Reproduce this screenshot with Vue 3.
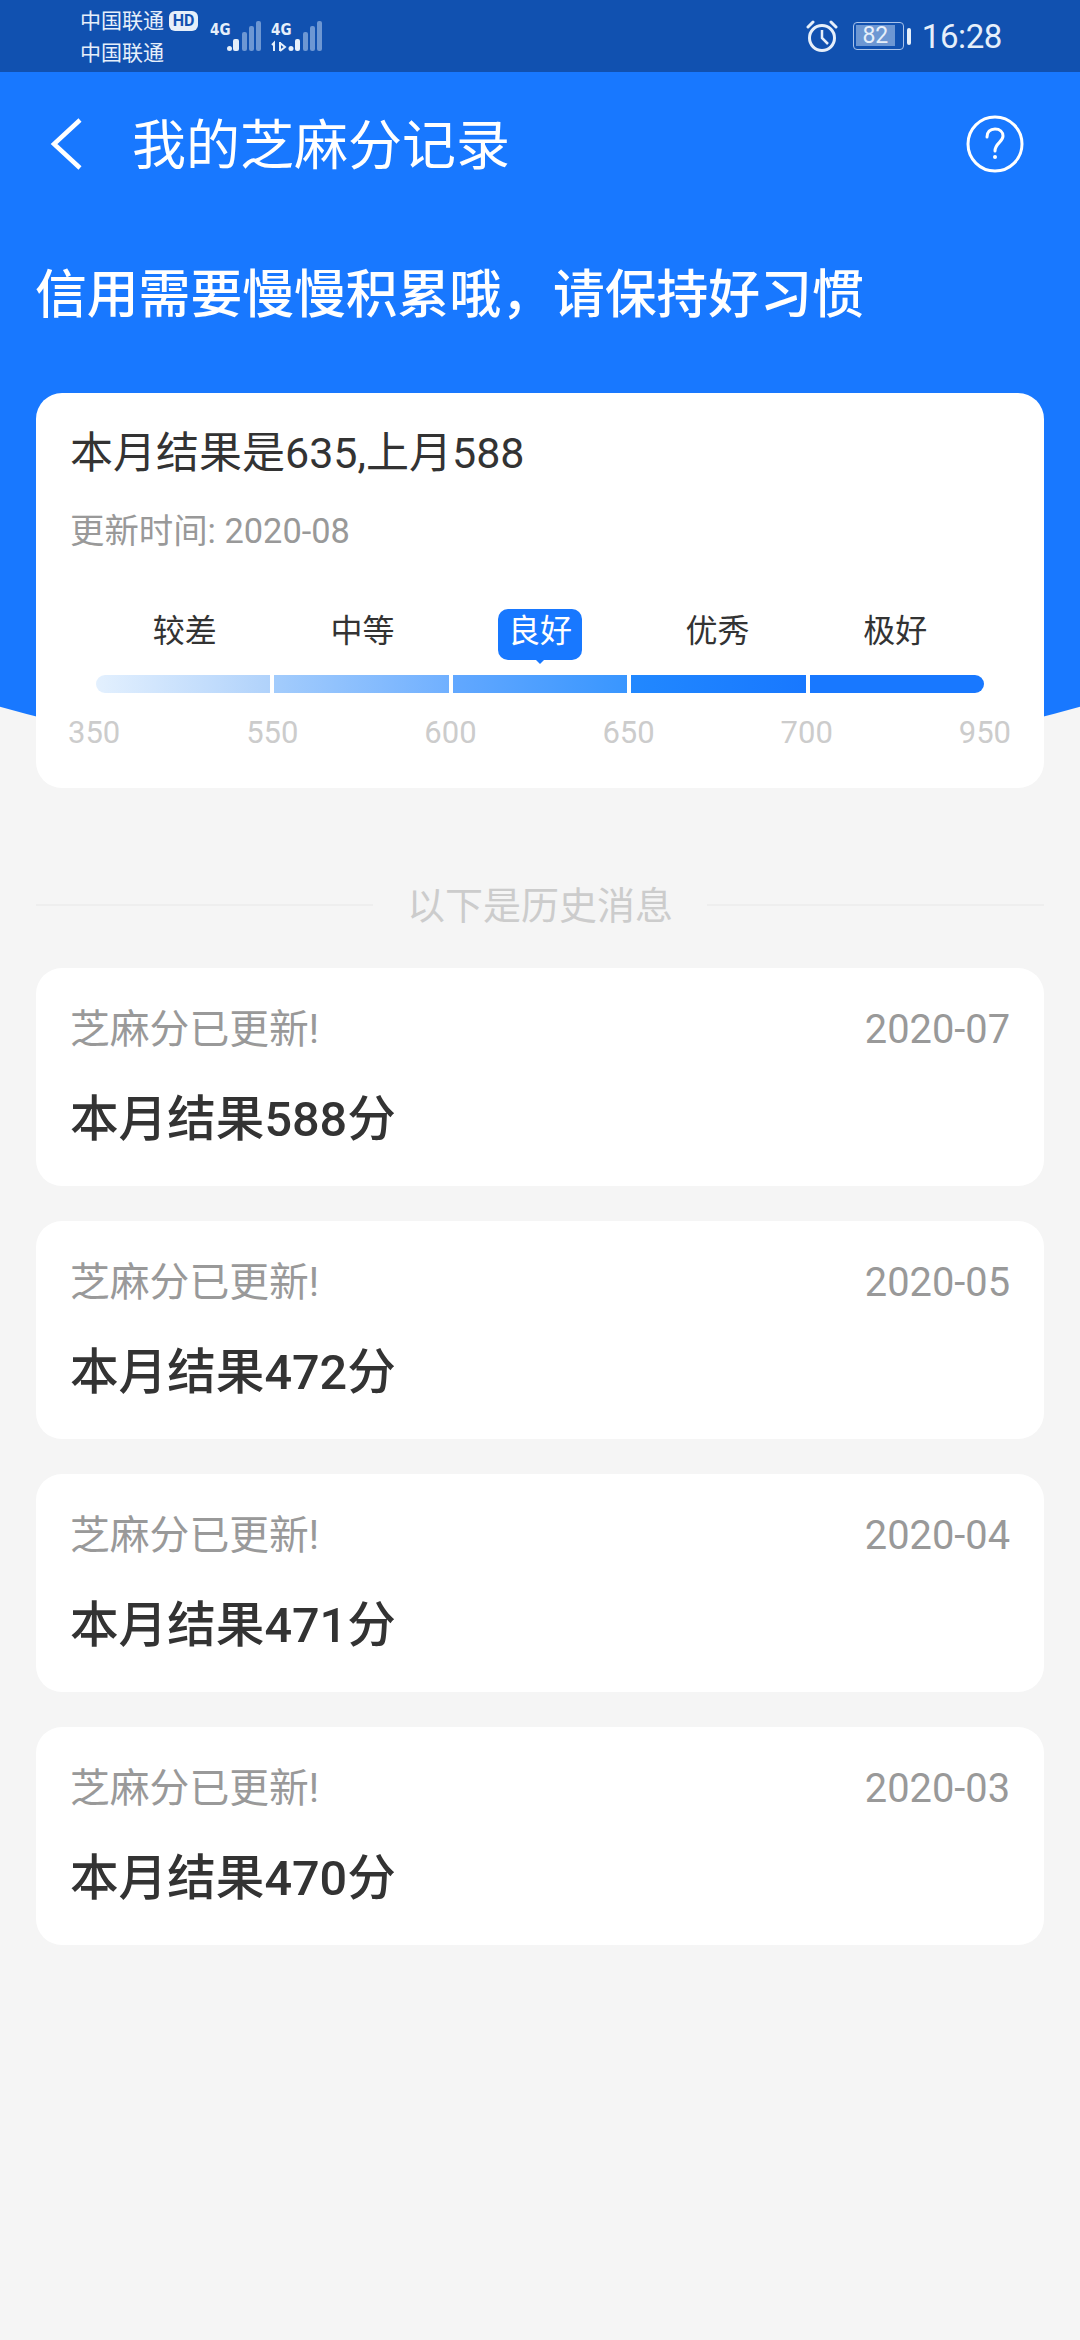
<template>
  <div class="page">
    <div class="hero-bg"></div>

    <div class="status-bar">
      <div class="carriers">
        <div class="carrier">中国联通<span class="hd">HD</span></div>
        <div class="carrier">中国联通</div>
      </div>
      <svg class="signal" width="120" height="40" viewBox="205 16 120 40">
        <text x="210" y="35" class="net">4G</text>
        <circle cx="229.5" cy="48.5" r="2.5" fill="#e6effa" />
        <rect x="233" y="39" width="6" height="12" rx="2" fill="#e6effa" />
        <rect x="242" y="32" width="5" height="19" rx="2" fill="#6d97d3" />
        <rect x="249" y="26" width="5" height="25" rx="2" fill="#6d97d3" />
        <rect x="256" y="21" width="5" height="30" rx="2" fill="#6d97d3" />
        <text x="271" y="35" class="net">4G</text>
        <path d="M274 51V43L272 45M280 42V51M280 43L285 47L280 51" fill="none" stroke="#e6effa" stroke-width="2" />
        <circle cx="291" cy="48.5" r="2.5" fill="#e6effa" />
        <rect x="295" y="39" width="5" height="12" rx="2" fill="#e6effa" />
        <rect x="303" y="32" width="5" height="19" rx="2" fill="#6d97d3" />
        <rect x="310" y="26" width="5" height="25" rx="2" fill="#6d97d3" />
        <rect x="317" y="21" width="5" height="30" rx="2" fill="#6d97d3" />
      </svg>
      <div class="status-right">
        <svg width="32" height="34" viewBox="0 0 32 34" fill="none" stroke="#e6effa" stroke-width="3">
          <circle cx="16" cy="19" r="12.5" />
          <path d="M16 11V19L22 25" stroke-width="2.5" />
          <path d="M2 8L7 3M30 8L25 3" stroke-linecap="round" />
        </svg>
        <div class="battery">
          <div class="battery-body"><span class="battery-fill">82</span></div>
          <div class="battery-cap"></div>
        </div>
        <span class="time">16:28</span>
      </div>
    </div>

    <div class="nav">
      <svg class="back" width="32" height="52" viewBox="0 0 32 52" fill="none" stroke="#fff" stroke-width="4.5">
        <path d="M30 2L4 26L30 50" />
      </svg>
      <div class="nav-title">我的芝麻分记录</div>
      <svg class="help" width="58" height="58" viewBox="0 0 58 58" fill="none" stroke="#fff">
        <circle cx="29" cy="29" r="27" stroke-width="3" />
        <path d="M21 22C21 17 24 14 29 14C34 14 37 17 37 21C37 27 29 28 29 36" stroke-width="3" stroke-linecap="round" />
        <circle cx="29" cy="42" r="2" fill="#fff" stroke="none" />
      </svg>
    </div>

    <div class="slogan">信用需要慢慢积累哦，请保持好习惯</div>

    <div class="card summary">
      <div class="summary-title">本月结果是635,上月588</div>
      <div class="summary-time">更新时间: 2020-08</div>
      <div class="levels">
        <div v-for="l in levels" :key="l" class="level">
          <span :class="{ active: l === current }">{{ l }}</span>
        </div>
      </div>
      <div class="bar">
        <div v-for="(s, i) in segments" :key="i" class="seg" :style="{ background: s }"></div>
      </div>
      <div class="scores">
        <span v-for="n in scores" :key="n">{{ n }}</span>
      </div>
    </div>

    <div class="divider">
      <div class="line"></div>
      <span>以下是历史消息</span>
      <div class="line"></div>
    </div>

    <div class="history">
      <div v-for="h in history" :key="h.date" class="card item">
        <div class="item-top">
          <span>芝麻分已更新!</span>
          <span>{{ h.date }}</span>
        </div>
        <div class="item-main">本月结果{{ h.score }}分</div>
      </div>
    </div>
  </div>
</template>

<script setup>
const levels = ['较差', '中等', '良好', '优秀', '极好']
const current = '良好'
const scores = [350, 550, 600, 650, 700, 950]
const segments = [
  'linear-gradient(90deg, #e3f0fe, #b0d2fb)',
  'linear-gradient(90deg, #a3ccfc, #70b0ff)',
  'linear-gradient(90deg, #62a8ff, #3996ff)',
  'linear-gradient(90deg, #2188ff, #1878ff)',
  '#1878ff'
]
const history = [
  { date: '2020-07', score: 588 },
  { date: '2020-05', score: 472 },
  { date: '2020-04', score: 471 },
  { date: '2020-03', score: 470 }
]
</script>

<style>
body {
  background: #f5f5f5;
}
</style>

<style scoped>
.page {
  position: relative;
  width: 1080px;
  height: 2340px;
  overflow: hidden;
  background: #f5f5f5;
  font-family: Roboto, "Noto Sans CJK SC", sans-serif;
  color: #333;
}

.hero-bg {
  position: absolute;
  top: 0;
  left: 0;
  width: 100%;
  height: 786px;
  background: #1878ff;
  clip-path: circle(2000px at 50% -1219px);
}

.status-bar {
  position: relative;
  height: 72px;
  background: #1151b0;
  display: flex;
  align-items: center;
  padding-left: 80px;
  color: #e6effa;
}

.carriers {
  width: 125px;
  font-size: 21px;
  line-height: 32px;
  margin-top: 2px;
}

.carrier {
  display: flex;
  align-items: center;
  height: 32px;
}

.hd {
  margin-left: 5px;
  width: 29px;
  height: 20px;
  border-radius: 6px;
  background: #e6effa;
  color: #1151b0;
  font-size: 16px;
  line-height: 20px;
  font-weight: 700;
  text-align: center;
}

.net {
  font-family: "DejaVu Sans Condensed", sans-serif;
  font-size: 15px;
  font-weight: 700;
  fill: #e6effa;
}

.status-right {
  margin-left: auto;
  margin-right: 78px;
  display: flex;
  align-items: center;
}

.battery {
  display: flex;
  align-items: center;
  margin-left: 15px;
}

.battery-body {
  width: 51px;
  height: 28px;
  box-sizing: border-box;
  border: 1.5px solid #a9c3ea;
  border-radius: 4px;
  padding: 2px 4px 3px 2px;
}

.battery-fill {
  display: block;
  height: 100%;
  width: 39px;
  background: #6d97d3;
  font-size: 23px;
  line-height: 21px;
  text-align: center;
}

.battery-cap {
  width: 4px;
  height: 17px;
  margin-left: 3px;
  border-radius: 2px;
  background: #e6effa;
}

.time {
  margin-left: 11px;
  font-size: 33px;
  letter-spacing: -0.4px;
}

.nav {
  position: relative;
  height: 144px;
  display: flex;
  align-items: center;
  padding: 0 56px 0 50px;
  color: #fff;
}

.nav-title {
  margin-left: 50px;
  margin-top: -6px;
  font-size: 54px;
}

.help {
  margin-left: auto;
}

.slogan {
  position: relative;
  margin: 42px 0 0 35px;
  font-size: 51.8px;
  line-height: 76px;
  font-weight: 500;
  color: #fff;
}

.card {
  position: relative;
  margin: 0 36px;
  background: #fff;
  border-radius: 26px;
}

.summary {
  margin-top: 59px;
  height: 395px;
  padding: 34px 34px 0;
  box-sizing: border-box;
}

.summary-title {
  font-size: 43px;
  line-height: 52px;
}

.summary-time {
  margin-top: 30px;
  font-size: 34.4px;
  line-height: 44px;
  color: #999;
}

.levels {
  margin: 56px 26px 0;
  display: grid;
  grid-template-columns: repeat(5, 1fr);
  height: 51px;
}

.level {
  display: flex;
  justify-content: center;
  align-items: center;
  font-size: 32px;
}

.level span {
  position: relative;
  padding: 1px 10px 7px;
  line-height: 43px;
}

.level .active {
  background: #1878ff;
  color: #fff;
  border-radius: 10px;
}

.level .active::after {
  content: "";
  position: absolute;
  left: 50%;
  bottom: -4px;
  margin-left: -5px;
  border-left: 5px solid transparent;
  border-right: 5px solid transparent;
  border-top: 5px solid #1878ff;
}

.bar {
  margin: 15px 26px 0;
  height: 18px;
  display: flex;
  gap: 4px;
  border-radius: 9px;
  overflow: hidden;
}

.seg {
  flex: 1;
}

.scores {
  margin-top: 22px;
  display: flex;
  justify-content: space-between;
  margin-left: -2px;
  margin-right: -1px;
  font-size: 31px;
  line-height: 36px;
  color: #ccc;
}

.divider {
  margin: 92px 36px 0;
  height: 44px;
  display: flex;
  align-items: center;
  font-size: 38px;
  color: #ccc;
}

.divider .line {
  flex: 1;
  height: 2px;
  margin-top: 6px;
  background: #eee;
}

.divider span {
  margin: 0 34px;
}

.history {
  margin-top: 44px;
  display: flex;
  flex-direction: column;
  gap: 35px;
}

.item {
  height: 218px;
  padding: 38px 34px 0;
  box-sizing: border-box;
}

.item-top {
  display: flex;
  justify-content: space-between;
  font-size: 39.8px;
  line-height: 48px;
  color: #999;
}

.item-main {
  margin-top: 35px;
  font-size: 48.6px;
  line-height: 62px;
  font-weight: 500;
}
</style>
